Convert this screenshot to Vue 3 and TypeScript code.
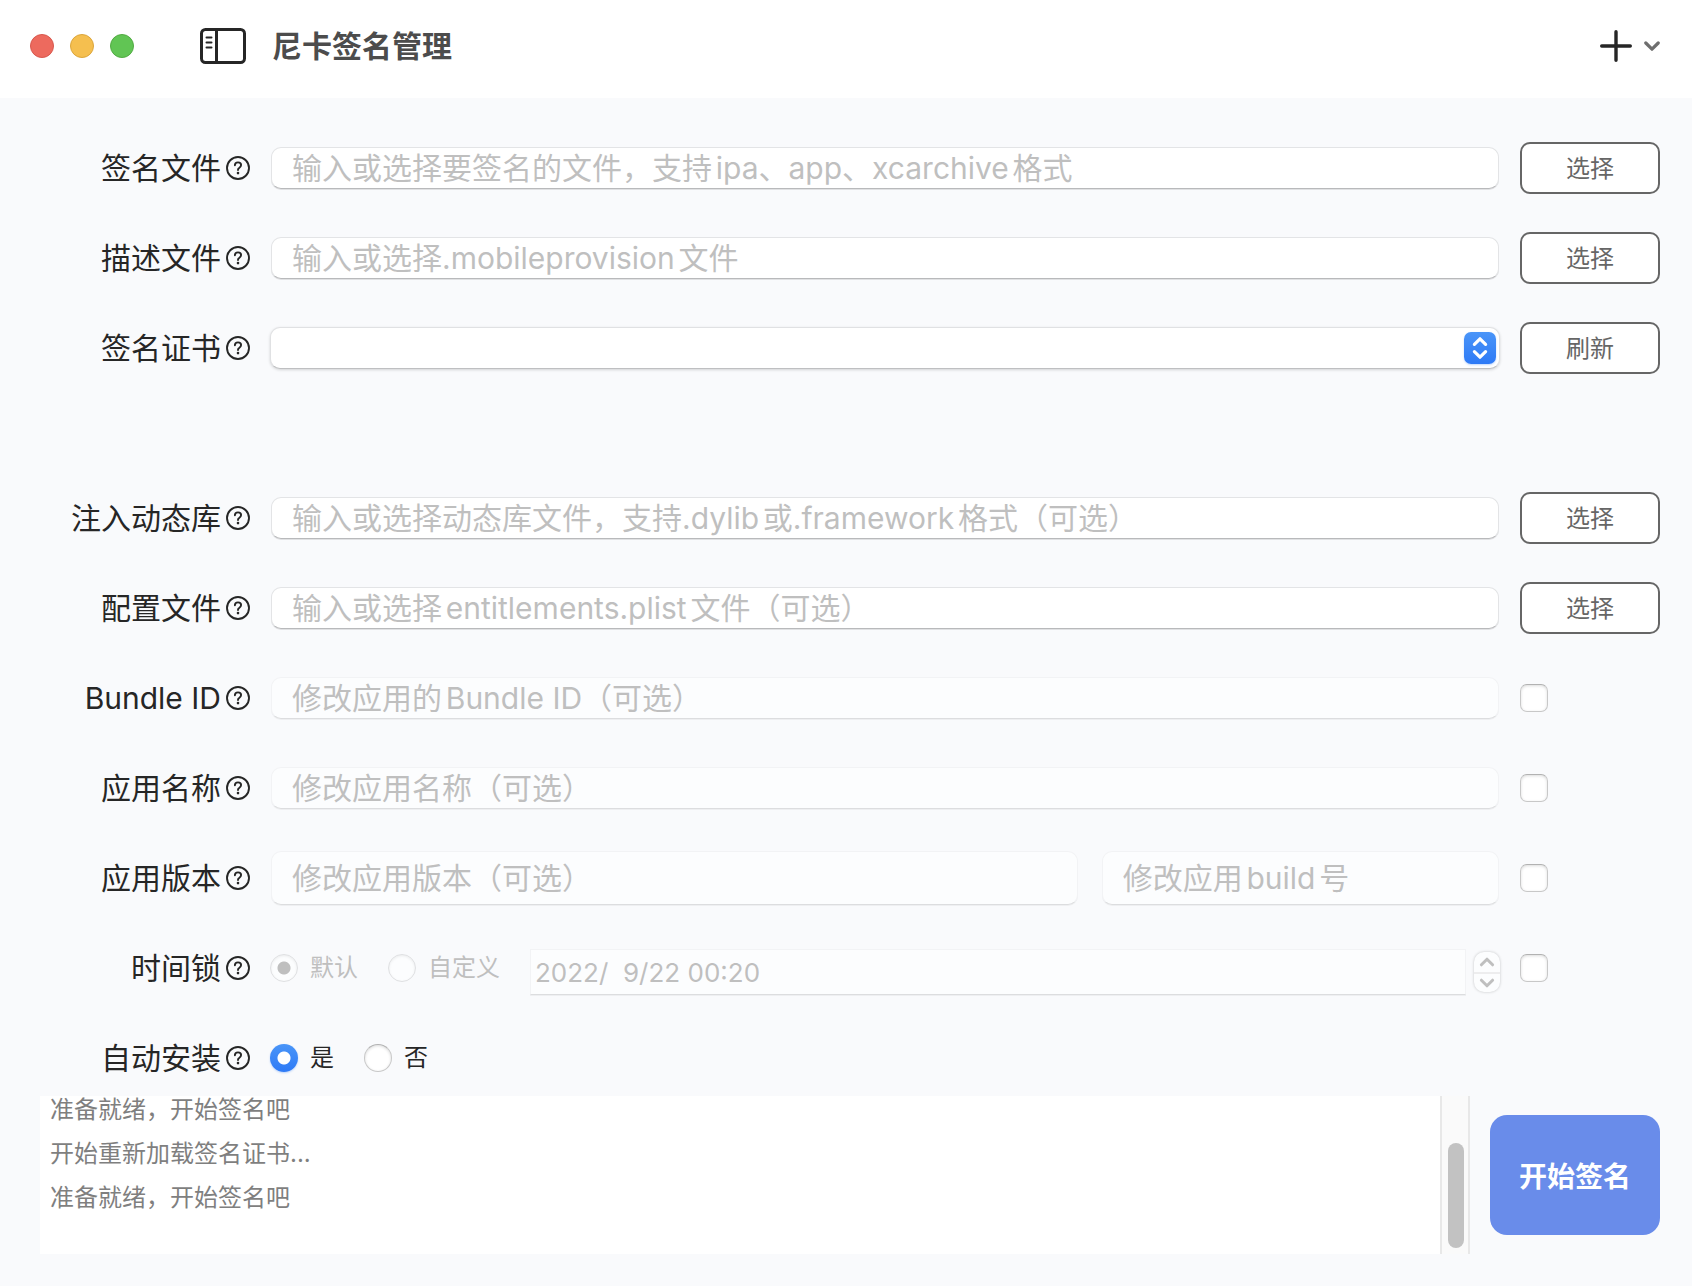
<script setup lang="ts">
import { ref } from 'vue'

interface Row {
  id: string
  label: string
  kind: 'text' | 'select' | 'version' | 'time' | 'install'
  placeholder?: string
  action?: string
  optional?: boolean
}

const groups: Row[][] = [
  [
    { id: 'app', label: '签名文件', kind: 'text', placeholder: '输入或选择要签名的文件，支持ipa、app、xcarchive格式', action: '选择' },
    { id: 'profile', label: '描述文件', kind: 'text', placeholder: '输入或选择.mobileprovision文件', action: '选择' },
    { id: 'cert', label: '签名证书', kind: 'select', action: '刷新' },
  ],
  [
    { id: 'dylib', label: '注入动态库', kind: 'text', placeholder: '输入或选择动态库文件，支持.dylib或.framework格式（可选）', action: '选择' },
    { id: 'plist', label: '配置文件', kind: 'text', placeholder: '输入或选择entitlements.plist文件（可选）', action: '选择' },
    { id: 'bundle', label: 'Bundle ID', kind: 'text', placeholder: '修改应用的Bundle ID（可选）', optional: true },
    { id: 'name', label: '应用名称', kind: 'text', placeholder: '修改应用名称（可选）', optional: true },
    { id: 'version', label: '应用版本', kind: 'version', placeholder: '修改应用版本（可选）', optional: true },
    { id: 'time', label: '时间锁', kind: 'time', optional: true },
    { id: 'install', label: '自动安装', kind: 'install' },
  ],
]

const enabled = ref<Record<string, boolean>>({ bundle: false, name: false, version: false, time: false })
const lockMode = ref('default')
const autoInstall = ref('yes')
const lockDate = ref('2022/  9/22 00:20')
const logs = ['准备就绪，开始签名吧', '开始重新加载签名证书...', '准备就绪，开始签名吧']
</script>

<template>
  <div class="window">
    <header class="titlebar">
      <div class="lights">
        <button class="light red" aria-label="关闭"></button>
        <button class="light yellow" aria-label="最小化"></button>
        <button class="light green" aria-label="缩放"></button>
      </div>
      <button class="plain sidebar" aria-label="边栏">
        <svg width="46" height="36" viewBox="0 0 46 36" fill="none" stroke="#262626">
          <rect x="1.5" y="1.5" width="43" height="33" rx="4" stroke-width="3" />
          <path d="M16.5 2v32" stroke-width="3" />
          <path d="M6.5 9.5h5M6.5 14.5h5M6.5 19.5h5" stroke-width="2" stroke-linecap="round" />
        </svg>
      </button>
      <h1>尼卡签名管理</h1>
      <button class="plain add" aria-label="添加">
        <svg width="32" height="32" viewBox="0 0 32 32" fill="none" stroke="#262626" stroke-width="3.4" stroke-linecap="round">
          <path d="M16 1.7v28.6M1.7 16h28.6" />
        </svg>
        <svg width="16" height="10" viewBox="0 0 16 10" fill="none" stroke="#6e6e6e" stroke-width="3.2" stroke-linecap="round" stroke-linejoin="round">
          <path d="M1.8 2l6.2 6.2L14.2 2" />
        </svg>
      </button>
    </header>

    <main>
      <form @submit.prevent>
        <section v-for="(group, g) in groups" :key="g" class="group">
          <div v-for="row in group" :key="row.id" class="row">
            <div class="caption">
              <label :for="row.id">{{ row.label }}</label>
              <button type="button" class="plain help" :aria-label="row.label + '说明'">
                <svg width="24" height="24" viewBox="0 0 24 24" fill="none" stroke="#262626" stroke-linecap="round" stroke-linejoin="round">
                  <circle cx="12" cy="12" r="11" stroke-width="1.9" />
                  <path d="M8.9 9.3c0-1.8 1.3-2.9 3.1-2.9s3.1 1.1 3.1 2.7c0 1.3-.7 1.9-1.7 2.6-.9.6-1.4 1.1-1.4 2.1v.3" stroke-width="1.9" />
                  <circle cx="12" cy="17.1" r="1.3" fill="#262626" stroke="none" />
                </svg>
              </button>
            </div>

            <div v-if="row.kind === 'text'" class="field inset">
              <input :id="row.id" class="box" type="text" :placeholder="row.placeholder" :disabled="row.optional && !enabled[row.id]" />
            </div>

            <div v-else-if="row.kind === 'select'" class="field">
              <select :id="row.id" class="picker"></select>
              <span class="badge">
                <svg width="32" height="32" viewBox="0 0 32 32" fill="none" stroke="#fff" stroke-width="3.2" stroke-linecap="round" stroke-linejoin="round">
                  <path d="M10.4 12.4L16 6.8l5.6 5.6M10.4 19.6l5.6 5.6 5.6-5.6" />
                </svg>
              </span>
            </div>

            <div v-else-if="row.kind === 'version'" class="inset versions">
              <input :id="row.id" class="box tall" type="text" :placeholder="row.placeholder" :disabled="!enabled.version" />
              <input class="box tall" type="text" placeholder="修改应用build号" aria-label="build号" :disabled="!enabled.version" />
            </div>

            <div v-else-if="row.kind === 'time'" class="field options">
              <label class="option off"><input :id="row.id" v-model="lockMode" type="radio" name="lock" value="default" :disabled="!enabled.time" />默认</label>
              <label class="option off"><input v-model="lockMode" type="radio" name="lock" value="custom" :disabled="!enabled.time" />自定义</label>
              <div class="date">
                <input v-model="lockDate" class="box square" type="text" aria-label="日期" :disabled="!enabled.time" />
                <div class="stepper">
                  <button type="button" class="plain" aria-label="增加" :disabled="!enabled.time">
                    <svg width="16" height="10" viewBox="0 0 16 10" fill="none" stroke="#bfbfbf" stroke-width="3" stroke-linecap="round" stroke-linejoin="round"><path d="M2.4 7.8L8 2.2l5.6 5.6" /></svg>
                  </button>
                  <button type="button" class="plain" aria-label="减少" :disabled="!enabled.time">
                    <svg width="16" height="10" viewBox="0 0 16 10" fill="none" stroke="#bfbfbf" stroke-width="3" stroke-linecap="round" stroke-linejoin="round"><path d="M2.4 2.2L8 7.8l5.6-5.6" /></svg>
                  </button>
                </div>
              </div>
            </div>

            <div v-else class="field options">
              <label class="option"><input :id="row.id" v-model="autoInstall" type="radio" name="install" value="yes" />是</label>
              <label class="option"><input v-model="autoInstall" type="radio" name="install" value="no" />否</label>
            </div>

            <button v-if="row.action" type="button" class="action">{{ row.action }}</button>
            <input v-else-if="row.optional" v-model="enabled[row.id]" type="checkbox" :aria-label="'启用' + row.label" />
          </div>
        </section>
      </form>

      <footer>
        <div class="log" role="log">
          <div class="lines">
            <p v-for="(line, i) in logs" :key="i">{{ line }}</p>
          </div>
          <div class="track"><div class="thumb"></div></div>
        </div>
        <button class="start">开始签名</button>
      </footer>
    </main>
  </div>
</template>

<style>
body {
  margin: 0;
  background: #f9fafc;
}
</style>

<style scoped>
.window {
  min-height: 100vh;
  background: #f9fafc;
  color: #262626;
  font-family: Inter, "Noto Sans CJK SC", sans-serif;
  font-size: 30px;
  line-height: 40px;
  text-autospace: normal;
}
.window * {
  box-sizing: border-box;
}
button,
input,
select {
  margin: 0;
  font: inherit;
  color: inherit;
  text-autospace: inherit;
}
.plain {
  display: flex;
  align-items: center;
  justify-content: center;
  padding: 0;
  border: 0;
  background: none;
}

.titlebar {
  display: flex;
  align-items: center;
  height: 98px;
  padding: 0 32px 6px 30px;
  background: #fff;
}
.lights {
  display: flex;
  gap: 16px;
}
.light {
  width: 24px;
  height: 24px;
  padding: 0;
  border: 1px solid;
  border-radius: 50%;
}
.red { background: #ed6a5e; border-color: #d8584e; }
.yellow { background: #f5bf4f; border-color: #dca63c; }
.green { background: #61c554; border-color: #52ab43; }
.sidebar {
  margin-left: 66px;
}
h1 {
  flex: 1;
  margin: 0 0 0 26px;
  font-size: 30px;
  font-weight: 700;
  color: #4c4c4c;
}
.add {
  gap: 12px;
}

form {
  padding: 44px 32px 0 40px;
}
.group {
  display: flex;
  flex-direction: column;
  gap: 38px;
}
.group + .group {
  margin-top: 118px;
}
.row {
  display: grid;
  grid-template-columns: 210px minmax(0, 1fr) 140px;
  grid-template-rows: 52px;
  column-gap: 20px;
  align-items: center;
}
.caption {
  display: flex;
  align-items: center;
  justify-content: flex-end;
  gap: 5px;
  white-space: nowrap;
}
.field {
  position: relative;
  display: flex;
  align-items: center;
}
.inset {
  padding: 0 1px;
}
.box {
  flex: 1;
  min-width: 0;
  height: 42px;
  padding: 0 20px;
  border: 1px solid #e3e4e6;
  border-bottom-color: #b8b9bb;
  border-radius: 10px;
  background: #fff;
  box-shadow: 0 1px 0 #e0e1e3;
}
.box::placeholder {
  color: #bfbfbf;
  opacity: 1;
}
.box:disabled {
  border-color: #f2f3f5;
  border-bottom-color: #dcdddf;
  background: #fcfdfe;
  color: #bfbfbf;
  box-shadow: 0 1px 0 #eeeff1;
}
.versions {
  display: grid;
  grid-template-columns: minmax(0, 67fr) minmax(0, 33fr);
  gap: 24px;
}
.tall {
  height: 54px;
}
.picker {
  width: 100%;
  height: 42px;
  border: 1px solid #e0e1e3;
  border-bottom-color: #bebfc1;
  border-radius: 10px;
  background: #fff;
  appearance: none;
  box-shadow: 0 1px 3px rgba(0, 0, 0, 0.16);
}
.badge {
  position: absolute;
  right: 4px;
  width: 32px;
  height: 32px;
  border-radius: 7px;
  background: linear-gradient(#4a95f8, #2e7af6);
  box-shadow: 0 1px 2px rgba(46, 122, 246, 0.3);
  pointer-events: none;
}
.badge svg {
  display: block;
}
.action {
  height: 52px;
  padding: 2px 0 0;
  border: 2px solid #666;
  border-radius: 10px;
  background: #fff;
  color: #666;
  font-size: 24px;
}

input[type="checkbox"],
input[type="radio"] {
  flex: none;
  width: 28px;
  height: 28px;
  border: 1px solid #c8c8c8;
  border-top-color: #b2b2b2;
  background: #fff;
  appearance: none;
  box-shadow: inset 0 1px 3px rgba(0, 0, 0, 0.14);
}
input[type="checkbox"] {
  border-radius: 7px;
}
input[type="radio"] {
  border-radius: 50%;
}
input[type="radio"]:checked {
  border: 0;
  background: radial-gradient(circle, #fff 6px, transparent 7px), linear-gradient(#4a95f8, #2e7af6);
  box-shadow: 0 1px 2px rgba(46, 122, 246, 0.3);
}
input[type="radio"]:disabled {
  border: 1px solid #dfe0e2;
  background: #fcfdfe;
  box-shadow: inset 0 1px 3px rgba(0, 0, 0, 0.07);
}
input[type="radio"]:disabled:checked {
  background: radial-gradient(circle, #bfbfbf 6px, #fcfdfe 7px);
}
.options {
  gap: 30px;
}
.option {
  display: flex;
  align-items: center;
  gap: 12px;
  font-size: 24px;
  white-space: nowrap;
}
.off {
  color: #bfbfbf;
}
.date {
  display: flex;
  flex: 1;
  align-items: center;
  gap: 8px;
  min-width: 0;
  padding-top: 8px;
}
.square {
  height: 46px;
  padding: 0 4px;
  border-radius: 0;
  font-size: 26px;
}
.stepper {
  width: 26px;
  height: 40px;
  border-radius: 10px;
  background: #fcfdfe;
  box-shadow: 0 0 3px rgba(0, 0, 0, 0.22);
}
.stepper button {
  width: 100%;
  height: 20px;
}
.stepper button + button {
  border-top: 2px solid #ededee;
}

footer {
  display: grid;
  grid-template-columns: minmax(0, 1fr) 170px;
  column-gap: 20px;
  align-items: center;
  padding: 12px 32px 32px 40px;
}
.log {
  display: flex;
  height: 158px;
  background: #fff;
  color: #7f7f7f;
  font-size: 24px;
  line-height: 28px;
}
.lines {
  display: flex;
  flex: 1;
  flex-direction: column;
  gap: 16px;
  padding-left: 10px;
}
.lines p {
  margin: 0;
}
.track {
  display: flex;
  align-items: flex-end;
  justify-content: flex-end;
  width: 30px;
  padding: 0 4px 6px 0;
  border: solid #e8e8e8;
  border-width: 0 2px;
  background: #fafafa;
}
.thumb {
  width: 16px;
  height: 105px;
  border-radius: 8px;
  background: #c2c2c2;
}
.start {
  height: 120px;
  padding: 4px 0 0;
  border: 0;
  border-radius: 17px;
  background: #698cea;
  color: #fff;
  font-size: 28px;
  font-weight: 700;
}
</style>
